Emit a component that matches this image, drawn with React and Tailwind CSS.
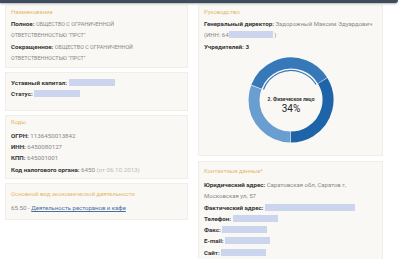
import React from 'react';

const Hidden = ({ w }) => (
  <span className="inline-block h-[7px] align-[-1px] bg-[#cbd5ee]" style={{ width: w }} />
);

function Panel({ title, className = '', children }) {
  return (
    <div className={`bg-[#f9f8f5] border border-[#f1eee8] px-[5px] ${className}`}>
      {title && <div className="text-[#e5b868] text-[5.9px] leading-[11px]">{title}</div>}
      {children}
    </div>
  );
}

const Row = ({ label, children, className = '' }) => (
  <div className={`h-[11.3px] whitespace-nowrap text-[6px] leading-[11.3px] text-[#888] ${className}`}>
    {label && <b className="text-[#333] font-bold text-[6.2px] leading-none">{label}</b>} {children}
  </div>
);

const Caps = ({ children }) => <span className="text-[5.4px] leading-none">{children}</span>;
const Num = ({ children }) => <span className="text-[6.2px] leading-none">{children}</span>;

function Donut() {
  const cx = 44;
  const cy = 44;
  const r = 37;
  const C = 2 * Math.PI * r;
  const segs = [
    { from: 59, to: 180, color: '#1d64a9' },
    { from: 181, to: 290, color: '#6a9dd0' },
    { from: 291, to: 418, color: '#3778b9' },
  ];
  const r2 = 29.5;
  const C2 = 2 * Math.PI * r2;
  return (
    <svg width="88" height="90" viewBox="0 0 88 90">
      {segs.map((s, i) => (
        <circle
          key={i}
          cx={cx}
          cy={cy}
          r={r}
          fill="none"
          stroke={s.color}
          strokeWidth="11"
          strokeDasharray={`${((s.to - s.from) / 360) * C} ${C}`}
          transform={`rotate(${s.from - 90} ${cx} ${cy})`}
        />
      ))}
      <circle
        cx={cx}
        cy={cy}
        r={r2}
        fill="none"
        stroke="#3778b9"
        strokeWidth="1.2"
        strokeDasharray={`${(127 / 360) * C2} ${C2}`}
        transform={`rotate(${291 - 90} ${cx} ${cy})`}
      />
      <text x="44" y="45" textAnchor="middle" fontSize="5" fontWeight="bold" fill="#333" fontFamily="Roboto, Arial, sans-serif">2. Физическое лицо</text>
      <text x="44" y="56" textAnchor="middle" fontSize="10" fill="#222" fontFamily="Roboto, Arial, sans-serif">34%</text>
    </svg>
  );
}

export default function App() {
  return (
    <div className="w-[400px] h-[259px] overflow-hidden bg-white font-['Roboto',Arial,sans-serif]">
      <div className="h-[3px] w-[398px] bg-[#3d4d5e] rounded-br-[3px] shadow-[0_1px_2px_rgba(0,0,0,0.3)]" />
      <div className="flex gap-[10px] pl-[5px] pt-[2px]">
        <div className="w-[183px] flex flex-col gap-[4px]">
          <Panel title="Наименование" className="pt-[1px] pb-[4px]">
            <Row label="Полное:"><Caps>ОБЩЕСТВО С ОГРАНИЧЕННОЙ</Caps></Row>
            <Row><Caps>ОТВЕТСТВЕННОСТЬЮ "ПРСТ"</Caps></Row>
            <Row label="Сокращенное:"><Caps>ОБЩЕСТВО С ОГРАНИЧЕННОЙ</Caps></Row>
            <Row><Caps>ОТВЕТСТВЕННОСТЬЮ "ПРСТ"</Caps></Row>
          </Panel>
          <Panel className="pt-[4px] pb-[10px]">
            <Row label="Уставный капитал:"><Hidden w={46} /></Row>
            <Row label="Статус:"><Hidden w={46} /></Row>
          </Panel>
          <Panel title="Коды" className="pt-[1px] pb-[3px]">
            <Row label="ОГРН:" className="mt-[2px]"><Num>1136450013842</Num></Row>
            <Row label="ИНН:"><Num>6450080127</Num></Row>
            <Row label="КПП:"><Num>645001001</Num></Row>
            <Row label="Код налогового органа:"><Num>6450 <span className="text-[#bbb]">(от 06.10.2013)</span></Num></Row>
          </Panel>
          <Panel title="Основной вид экономической деятельности" className="pt-[5px] pb-[6px]">
            <Row className="mt-[2px]">
              <Num>65.50 - </Num><span className="text-[#4a6f9c] underline">Деятельность ресторанов и кафе</span>
            </Row>
          </Panel>
        </div>
        <div className="w-[185px] flex flex-col gap-[5px]">
          <Panel title="Руководство" className="pt-[1px] pb-[4px] h-[151px]">
            <Row label="Генеральный директор:">Задорожный Максим Эдуардович</Row>
            <Row>(ИНН: <Num>64</Num><Hidden w={44} /> )</Row>
            <Row label="Учредителей: 3" />
            <div className="flex justify-center mt-[4px]">
              <Donut />
            </div>
          </Panel>
          <Panel title="Контактные данные*" className="pt-[4px] pb-[4px]">
            <Row label="Юридический адрес:" className="mt-[2px]">Саратовская обл, Саратов г,</Row>
            <Row>Московская ул, <Num>57</Num></Row>
            <Row label="Фактический адрес:"><Hidden w={90} /></Row>
            <Row label="Телефон:"><Hidden w={45} /></Row>
            <Row label="Факс:"><Hidden w={45} /></Row>
            <Row label="E-mail:"><Hidden w={45} /></Row>
            <Row label="Сайт:"><Hidden w={45} /></Row>
          </Panel>
        </div>
      </div>
    </div>
  );
}
